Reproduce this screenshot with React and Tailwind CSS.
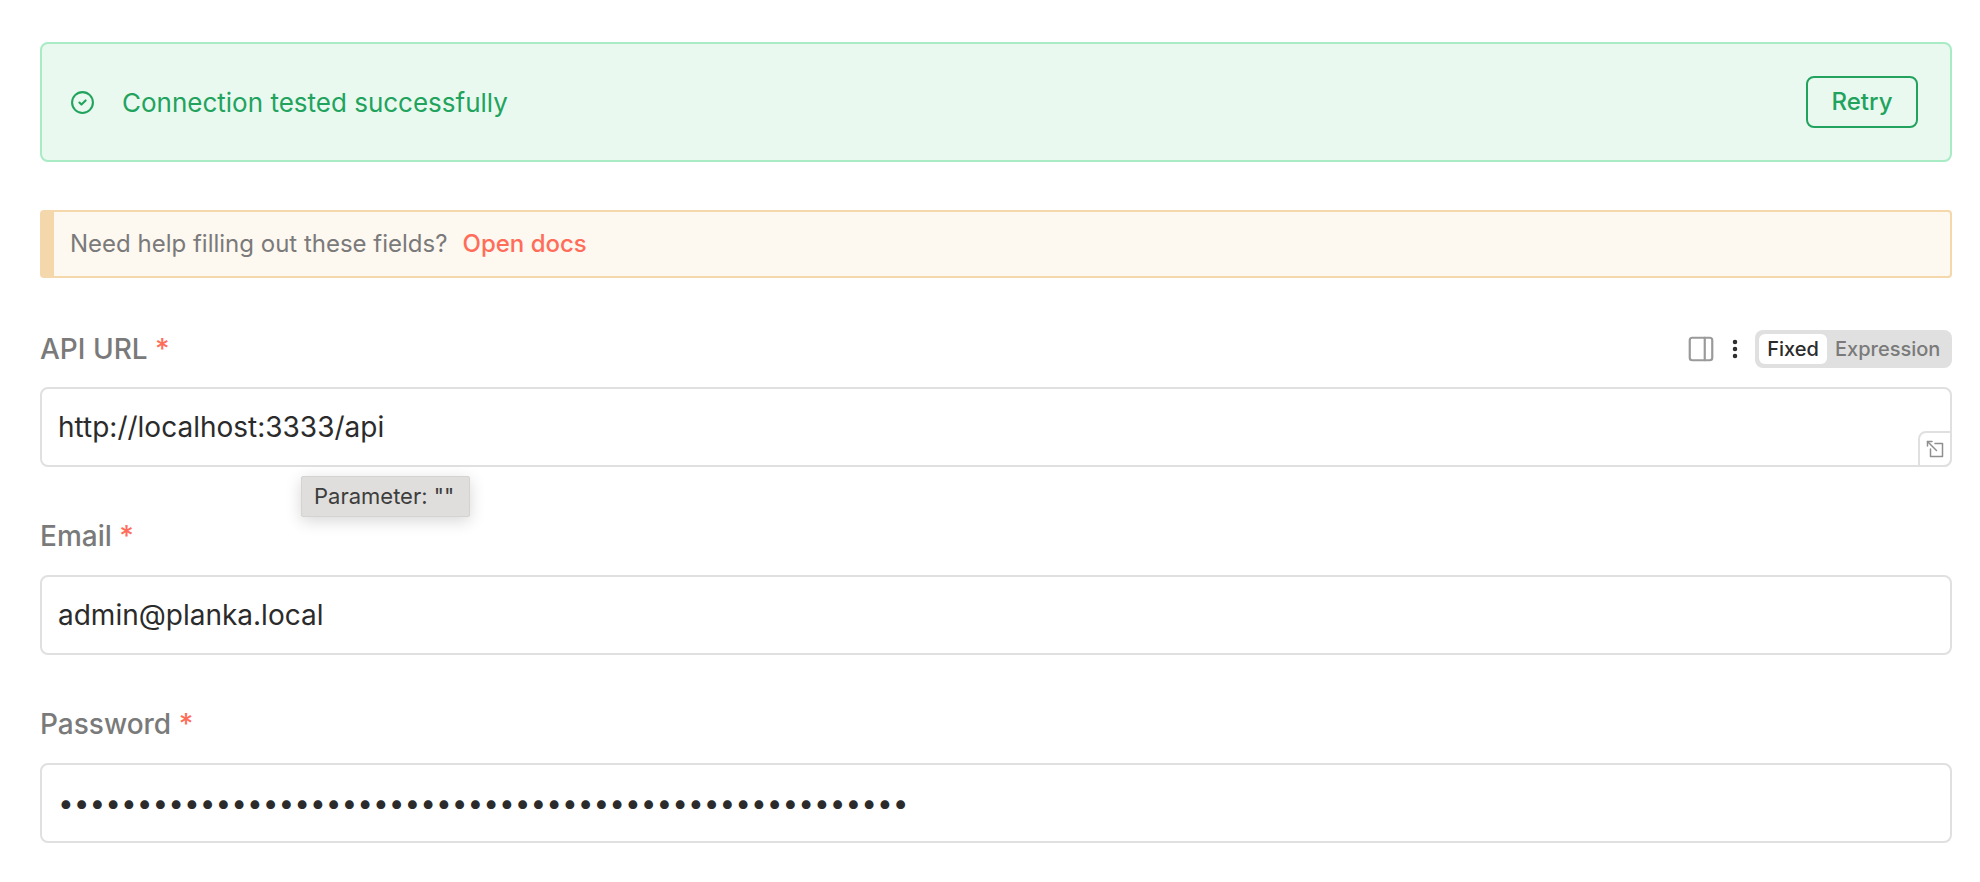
import React from 'react';
import { PanelRight, EllipsisVertical, CircleCheck } from 'lucide-react';

const Label = ({ children }) => (
  <div className="text-[28px] leading-[32px] font-medium text-[#7a7a7a]">
    {children} <span className="text-[#ff6d5a]">*</span>
  </div>
);

const Field = ({ value, children }) => (
  <div className="relative flex h-[80px] items-center rounded-[8px] border-2 border-[#e0e0e0] bg-white px-4 text-[28px] text-[#2b2b2b]">
    {value}
    {children}
  </div>
);

const ExpandCorner = () => (
  <div className="absolute -right-[2px] -bottom-[2px] flex h-[36px] w-[34px] items-center justify-center rounded-tl-[8px] rounded-br-[8px] border-2 border-[#e0e0e0] bg-white">
    <svg width="18" height="18" viewBox="0 0 18 18" fill="none" stroke="#8f8f8f" strokeWidth="1.5" strokeLinecap="round" strokeLinejoin="round">
      <path d="M1.5 6V1.5H6" />
      <path d="M1.5 1.5L10.5 10.5" />
      <path d="M9 3.5H16.5V16.5H4.5V9" />
    </svg>
  </div>
);

export default function App() {
  return (
    <div className="relative h-[882px] overflow-hidden bg-white pt-[42px] pr-7 pl-10 font-['Inter',sans-serif]">
      <div className="flex h-[120px] items-center justify-between rounded-[8px] border-2 border-[#a8ebc5] bg-[#e9f9f0] pr-[32px] pl-[28px]">
        <div className="flex items-center gap-[27px] text-[26px] text-[#22a35d]">
          <CircleCheck size={25} strokeWidth={2} />
          <span>Connection tested successfully</span>
        </div>
        <button className="h-[52px] w-[112px] rounded-[8px] border-2 border-[#22a35d] text-[24px] font-medium text-[#22a35d]">
          Retry
        </button>
      </div>

      <div className="mt-[48px] flex h-[68px] items-center rounded-[4px] border-2 border-l-[14px] border-[#f4d7aa] bg-[#fdf8f0] pl-[16px] text-[24px] text-[#7a7a7a]">
        Need help filling out these fields?
        <span className="ml-[15px] font-medium text-[#ff6d5a]">Open docs</span>
      </div>

      <div className="mt-[52px] mb-[20px] flex h-[37px] items-center justify-between">
        <Label>API URL</Label>
        <div className="flex items-center">
          <PanelRight size={30} strokeWidth={1.75} className="text-[#9a9a9a]" />
          <EllipsisVertical size={24} strokeWidth={2.5} className="ml-[7px] text-[#2b2b2b]" />
          <div className="ml-[8px] flex h-[38px] w-[197px] items-center rounded-[8px] bg-[#e0e0e0] p-[4px] text-[20px] font-medium">
            <span className="flex h-[30px] w-[68px] items-center justify-center rounded-[6px] bg-white text-[#2b2b2b]">Fixed</span>
            <span className="ml-[8px] text-[#7a7a7a]">Expression</span>
          </div>
        </div>
      </div>
      <Field value="http://localhost:3333/api">
        <ExpandCorner />
      </Field>

      <div className="mt-[53px] mb-[23px]">
        <Label>Email</Label>
      </div>
      <Field value="admin@planka.local" />

      <div className="mt-[53px] mb-[23px]">
        <Label>Password</Label>
      </div>
      <Field value={'•'.repeat(54)} />

      <div className="absolute top-[476px] left-[301px] flex h-[41px] w-[169px] items-center rounded-[2px] border border-[#d4d3d1] bg-[#dfdedc] pl-[12px] text-[22px] text-[#3d3d3d] shadow-[0_4px_16px_rgba(0,0,0,0.16)]">
        Parameter: ""
      </div>
    </div>
  );
}
